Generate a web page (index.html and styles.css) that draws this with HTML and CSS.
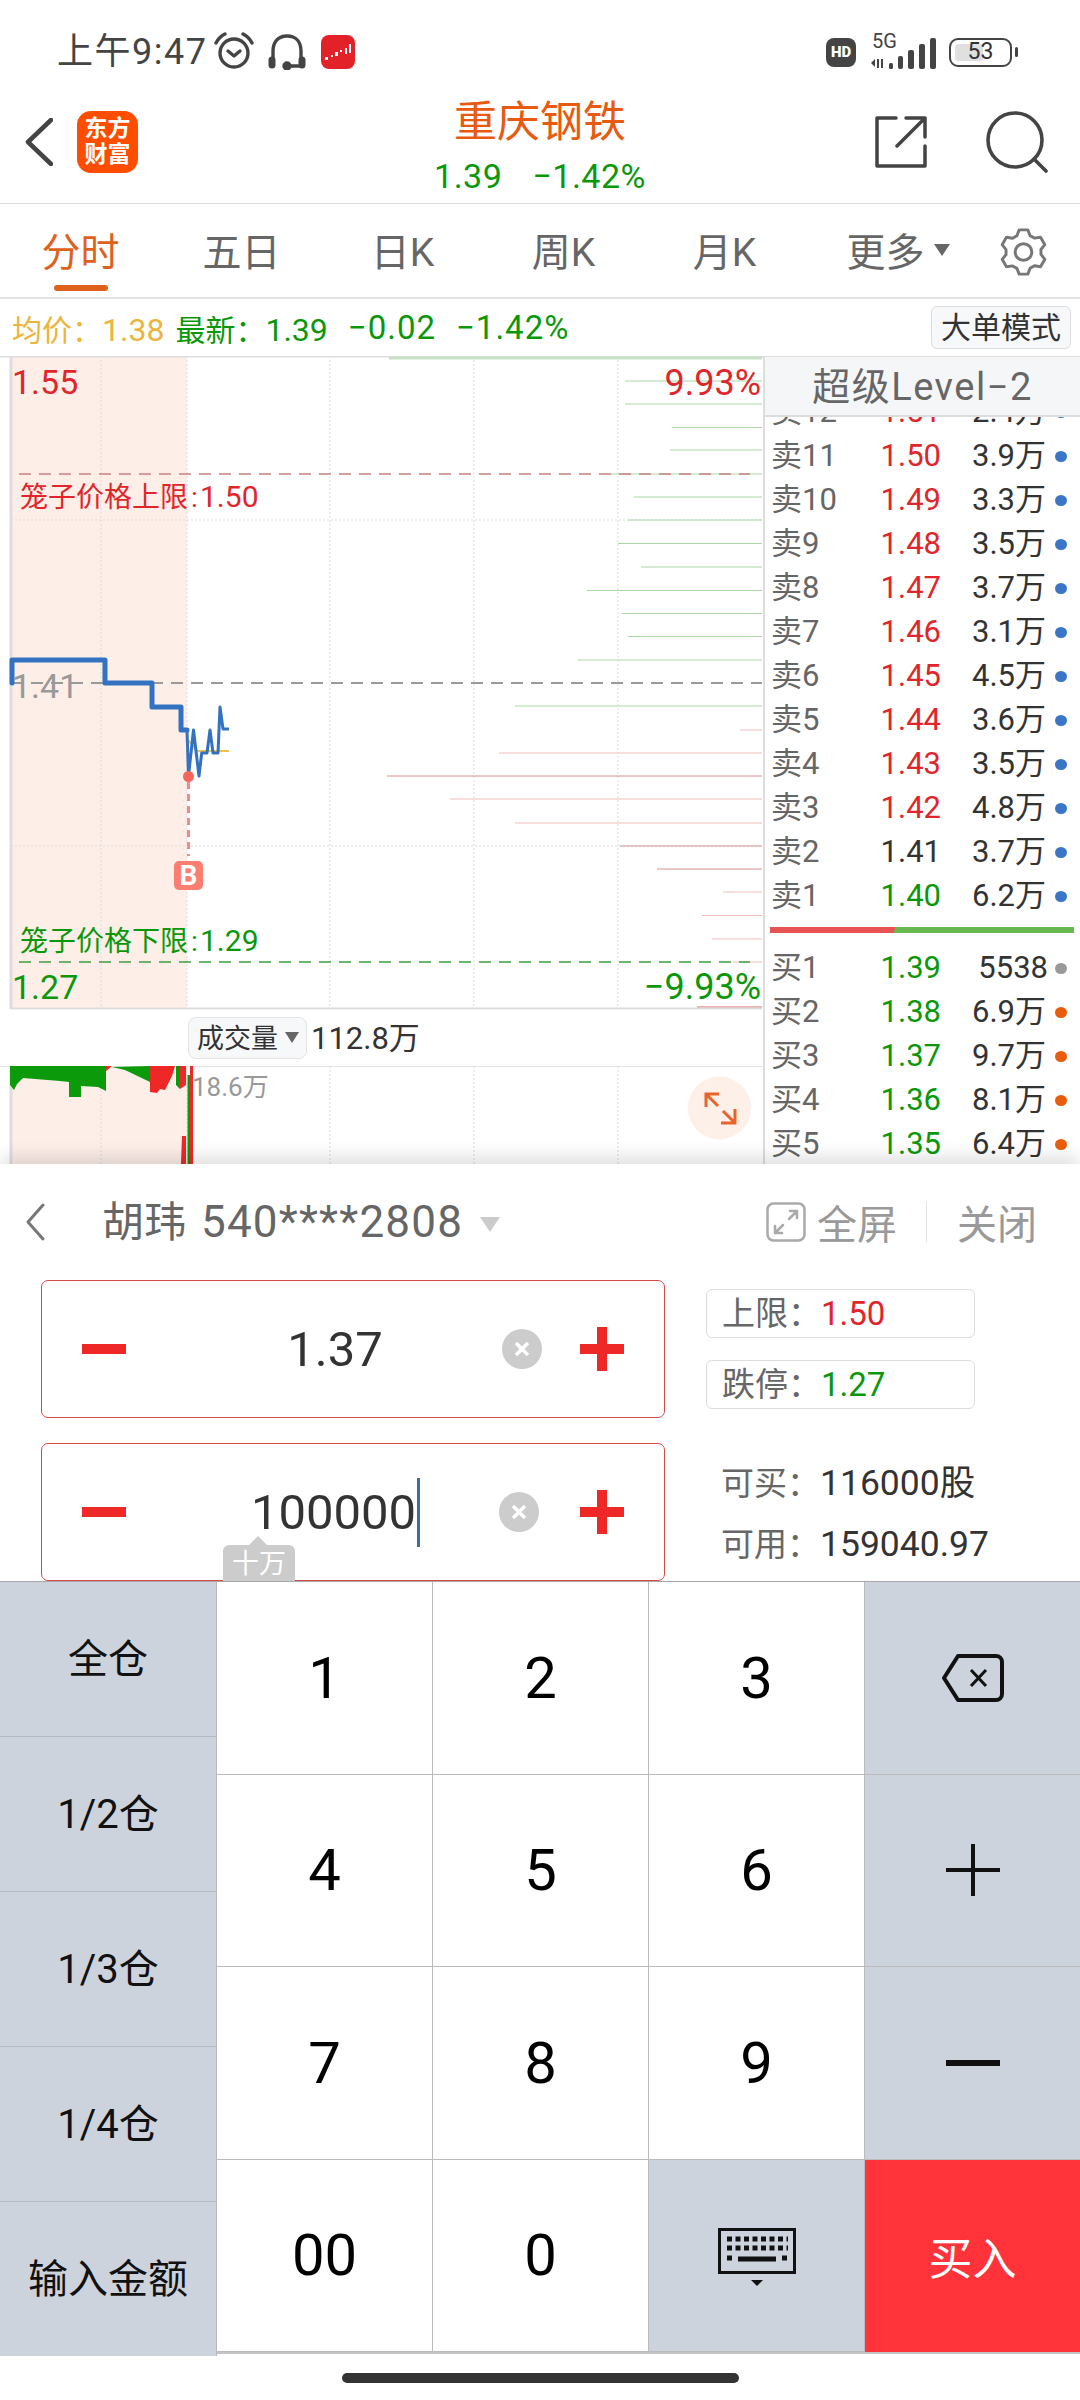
FILE: index.html
```html
<!DOCTYPE html>
<html lang="zh-CN">

<head>
    <meta charset="UTF-8">
    <meta name="viewport" content="width=device-width, initial-scale=1.0">
    <title>重庆钢铁</title>
    <link rel="stylesheet" href="styles.css">
</head>

<body>
    <!-- 상태바 -->
    <div class="status">
        <div class="status-left">
            <span class="clock">上午9:47</span>
            <svg class="ico-alarm" viewBox="0 0 40 40" fill="none" stroke="#444" stroke-width="3.4" stroke-linecap="round" stroke-linejoin="round">
                <circle cx="20" cy="21" r="14"/>
                <path d="M14 19l6 5 6-5"/>
                <path d="M2 11C4 7 7 4 11 2M38 11C36 7 33 4 29 2"/>
            </svg>
            <svg class="ico-headset" viewBox="0 0 38 36" fill="none" stroke="#444" stroke-width="3.4" stroke-linecap="round">
                <path d="M5 26V17C5 8 10 2 19 2s14 6 14 15v9"/>
                <path d="M4 26v5M34 26v5" stroke-width="7"/>
                <path d="M19 32h14"/>
                <circle cx="19" cy="32" r="3" fill="#444"/>
            </svg>
            <svg class="ico-app" viewBox="0 0 34 34">
                <rect width="34" height="34" rx="8" fill="#e22228"/>
                <path d="M4 22h3v3H4zM10 20h2v2h-2zM14 17h3v4h-3zM19 15h2v2h-2zM24 13h2v6h-2zM28 9h2v9h-2z" fill="#fff"/>
            </svg>
        </div>
        <div class="status-right">
            <span class="hd">HD</span>
            <svg class="ico-signal" viewBox="0 0 68 36">
                <text class="net-text" x="4" y="14">5G</text>
                <path d="M3 29l4-4v8zM9 25h2v9H9zM13 25h2v9h-2z" fill="#444"/>
                <rect x="21" y="29" width="4" height="6" rx="1.5" fill="#444"/>
                <rect x="30" y="22" width="5" height="13" rx="2" fill="#444"/>
                <rect x="40" y="16" width="6" height="19" rx="2" fill="#444"/>
                <rect x="51" y="10" width="6" height="25" rx="2" fill="#444"/>
                <rect x="62" y="4" width="6" height="31" rx="2" fill="#444"/>
            </svg>
            <div class="battery"><span class="battery-num">53</span></div>
        </div>
    </div>

    <!-- 상단 타이틀 -->
    <div class="nav">
        <div class="nav-left">
            <svg class="ico-back" viewBox="0 0 28 48" fill="none" stroke="#444" stroke-width="4.5" stroke-linecap="round" stroke-linejoin="round">
                <path d="M26 2L3 24l23 22"/>
            </svg>
            <div class="logo">东方<br>财富</div>
        </div>
        <div class="nav-title">
            <div class="stock-name">重庆钢铁</div>
            <div class="stock-price"><span>1.39</span><span>−1.42%</span></div>
        </div>
        <div class="nav-right">
            <svg class="ico-share" viewBox="0 0 52 52" fill="none" stroke="#444" stroke-width="3.5" stroke-linejoin="round" stroke-linecap="round">
                <path d="M21 2H2v48h48V30"/>
                <path d="M22 30L50 2M31 2h19v19"/>
            </svg>
            <svg class="ico-search" viewBox="0 0 62 62" fill="none" stroke="#444" stroke-width="3.6" stroke-linecap="round">
                <circle cx="29" cy="29" r="27"/>
                <path d="M48 48l12 12"/>
            </svg>
        </div>
    </div>

    <!-- 탭 -->
    <div class="tabs">
        <div class="tab select">分时</div>
        <div class="tab">五日</div>
        <div class="tab">日K</div>
        <div class="tab">周K</div>
        <div class="tab">月K</div>
        <div class="tab">更多<i class="tab-caret"></i></div>
        <svg class="ico-gear" viewBox="0 0 48 48" fill="none" stroke="#777" stroke-width="3" stroke-linejoin="round">
            <polygon points="17.3,7.3 19.6,1.4 28.4,1.4 30.7,7.3 35.1,9.8 41.4,8.9 45.8,16.5 41.8,21.4 41.85,26.5 45.8,31.5 41.4,39.1 35.15,38.1 30.7,40.7 28.4,46.6 19.6,46.6 17.3,40.7 12.9,38.2 6.6,39.1 2.2,31.5 6.2,26.6 6.15,21.5 2.2,16.5 6.6,8.9 12.85,9.9"/>
            <circle cx="24" cy="24" r="8.5"/>
        </svg>
    </div>

    <div class="quote-bar">
        <span class="avg">均价：<span class="quote-num">1.38</span></span>
        <span class="last">最新：<span class="quote-num">1.39</span></span>
        <span class="last change">−0.02</span>
        <span class="last change">−1.42%</span>
        <span class="mode-btn">大单模式</span>
    </div>

    <div class="market">
        <div class="chart">
            <!-- 분시 차트 -->
            <svg class="price-chart" viewBox="0 356 763 654">
                <rect x="11" y="356" width="176" height="652" fill="#fdeee8"/>
                <path d="M0 356.5H763" stroke="#ddd" stroke-width="2"/>
                <path d="M11 356V1009" stroke="#ddd" stroke-width="3"/>

                <path class="grid" d="M101 356V1008M187 356V1008M330 356V1008M474 356V1008M618 356V1008M11 520H762M11 846H762"/>

                <!-- 호가 잔량 -->
                <path d="M389 358H762" stroke="#c8e2c6" stroke-width="3"/>
                <path class="depth-g" d="M625 381H762M625 404H762M672 427.5H762M670 450H762M611 474H762M634 497H762M628 520H762M618 543.5H762M641 567H762M587 590.5H762M622 613.5H762M628 636.5H762M578 660H762M515 706H762"/>
                <path class="depth-r" d="M740 730H762M499 753H762M450 799H762M515 823H762M723 892H762M702 915.5H762M712 939H762M733 962H762"/>
                <path class="depth-d" d="M387 776H762M620 846H762M657 869H762"/>
                <path d="M697 1007H762" stroke="#eab0ae" stroke-width="2"/>

                <path d="M19 474H750" class="dash-red"/>
                <path d="M19 962H750" class="dash-green"/>
                <path d="M11 683H762" class="dash-gray"/>
                <path d="M11 1008.5H762" stroke="#ddd" stroke-width="2"/>

                <text class="label-lg c-red" x="12" y="394">1.55</text>
                <text class="label-xl c-red end" x="761" y="395">9.93%</text>
                <text class="label-lg c-gray" x="12" y="698">1.41</text>
                <text class="label-lg c-green" x="12" y="999">1.27</text>
                <text class="label-xl c-green end" x="761" y="999">−9.93%</text>
                <text class="label-sm c-red" x="20" y="507">笼子价格上限<tspan dx="3">:</tspan><tspan class="label-num" x="200">1.50</tspan></text>
                <text class="label-sm c-green" x="20" y="951">笼子价格下限<tspan dx="3">:</tspan><tspan class="label-num" x="200">1.29</tspan></text>

                <path d="M188 740L197 751H229" fill="none" stroke="#f5c04a" stroke-width="2"/>
                <path d="M12 683V660H105V683H152V707H181V730H187" fill="none" stroke="#3272c0" stroke-width="5" stroke-linejoin="round" stroke-linecap="round"/>
                <path d="M187 730L188.5 776L193.5 730L199 776L201.7 753H207L210 730L213 753H218L220 707L223 729H229" fill="none" stroke="#3272c0" stroke-width="3" stroke-linejoin="round"/>

                <path d="M188.5 782V856" stroke="#f78a80" stroke-width="3" stroke-dasharray="7 5"/>
                <circle cx="188.5" cy="776.5" r="5.5" fill="#f4685c"/>
                <rect x="174" y="861" width="29" height="29" rx="5" fill="#fb7e70"/>
                <text class="badge-b" x="188.5" y="885">B</text>
            </svg>

            <div class="vol-head">
                <span class="vol-btn">成交量<i class="vol-caret"></i></span>
                <span class="vol-num">112.8万</span>
            </div>

            <!-- 거래량 -->
            <svg class="vol-chart" viewBox="0 1066 763 98">
                <rect x="11" y="1066" width="176" height="98" fill="#fdeee8"/>
                <path d="M0 1066.5H763" stroke="#e4e4e4"/>
                <path d="M11 1066V1164" stroke="#ddd" stroke-width="3"/>
                <path class="grid" d="M101 1066V1164M187 1066V1164M330 1066V1164M474 1066V1164M618 1066V1164"/>
                <path fill="#0a9a0a" d="M10 1066V1085L14 1090L17 1084L23 1078L60 1081L69 1082V1097H81V1086L98 1087L106 1091V1066Z"/>
                <path fill="#0a9a0a" d="M112 1067L125 1070L150 1082V1066Z"/>
                <path fill="#0a9a0a" d="M176 1066V1085L180 1089V1066Z"/>
                <path fill="#ee2727" d="M106 1066V1071L112 1066Z"/>
                <path fill="#ee2727" d="M150 1066V1092L157 1093L160 1089L165 1090L172 1076L175 1066Z"/>
                <path fill="#ee2727" d="M180 1066V1089L186 1085V1066Z"/>
                <path fill="#ee2727" d="M182 1136H186V1164H181Z"/>
                <rect x="187.5" y="1075" width="2.5" height="89" fill="#0a9a0a"/>
                <rect x="190" y="1066" width="3" height="98" fill="#ee2727"/>
                <text class="label-xs c-gray" x="192" y="1096">18.6万</text>
                <circle cx="719.5" cy="1108" r="31.5" fill="#fdf0e8"/>
                <path d="M706 1107V1094H719M706 1094L718 1106M735 1109V1123H721M735 1123L723 1111" fill="none" stroke="#e8642a" stroke-width="3"/>
            </svg>
        </div>

        <div class="book">
            <div class="book-title">超级Level−2</div>
            <div class="asks">
                <div class="row"><span class="row-name">卖12</span><span class="c-red">1.51</span><span>2.4万</span><i class="dot"></i></div>
                <div class="row"><span class="row-name">卖11</span><span class="c-red">1.50</span><span>3.9万</span><i class="dot"></i></div>
                <div class="row"><span class="row-name">卖10</span><span class="c-red">1.49</span><span>3.3万</span><i class="dot"></i></div>
                <div class="row"><span class="row-name">卖9</span><span class="c-red">1.48</span><span>3.5万</span><i class="dot"></i></div>
                <div class="row"><span class="row-name">卖8</span><span class="c-red">1.47</span><span>3.7万</span><i class="dot"></i></div>
                <div class="row"><span class="row-name">卖7</span><span class="c-red">1.46</span><span>3.1万</span><i class="dot"></i></div>
                <div class="row"><span class="row-name">卖6</span><span class="c-red">1.45</span><span>4.5万</span><i class="dot"></i></div>
                <div class="row"><span class="row-name">卖5</span><span class="c-red">1.44</span><span>3.6万</span><i class="dot"></i></div>
                <div class="row"><span class="row-name">卖4</span><span class="c-red">1.43</span><span>3.5万</span><i class="dot"></i></div>
                <div class="row"><span class="row-name">卖3</span><span class="c-red">1.42</span><span>4.8万</span><i class="dot"></i></div>
                <div class="row"><span class="row-name">卖2</span><span>1.41</span><span>3.7万</span><i class="dot"></i></div>
                <div class="row"><span class="row-name">卖1</span><span class="c-green">1.40</span><span>6.2万</span><i class="dot"></i></div>
            </div>
            <div class="ratio"></div>
            <div class="bids">
                <div class="row"><span class="row-name">买1</span><span class="c-green">1.39</span><span class="row-vol-wide">5538</span><i class="dot dot-gray"></i></div>
                <div class="row"><span class="row-name">买2</span><span class="c-green">1.38</span><span>6.9万</span><i class="dot dot-orange"></i></div>
                <div class="row"><span class="row-name">买3</span><span class="c-green">1.37</span><span>9.7万</span><i class="dot dot-orange"></i></div>
                <div class="row"><span class="row-name">买4</span><span class="c-green">1.36</span><span>8.1万</span><i class="dot dot-orange"></i></div>
                <div class="row"><span class="row-name">买5</span><span class="c-green">1.35</span><span>6.4万</span><i class="dot dot-orange"></i></div>
            </div>
        </div>
    </div>

    <!-- 주문 패널 -->
    <div class="panel">
        <div class="acct">
            <svg class="ico-acct-back" viewBox="0 0 20 38" fill="none" stroke="#777" stroke-width="3" stroke-linecap="round" stroke-linejoin="round">
                <path d="M18 2L3 19l15 17"/>
            </svg>
            <span class="acct-name">胡玮<span class="acct-no">540****2808</span></span>
            <i class="acct-caret"></i>
            <svg class="ico-full" viewBox="0 0 40 40" fill="none" stroke="#aaa" stroke-width="2.5" stroke-linecap="round" stroke-linejoin="round">
                <rect x="1.5" y="1.5" width="37" height="37" rx="6"/>
                <path d="M23 17L31 9M24 9h7v7M17 23l-8 8M9 24v7h7"/>
            </svg>
            <span class="acct-act">全屏</span>
            <i class="acct-sep"></i>
            <span class="acct-act">关闭</span>
        </div>

        <div class="order">
            <div class="steppers">
                <div class="stepper">
                    <svg class="step-btn" viewBox="0 0 44 44"><rect y="17" width="44" height="10" fill="#ee2727"/></svg>
                    <div class="step-value">1.37</div>
                    <svg class="clear" viewBox="0 0 40 40"><circle cx="20" cy="20" r="20" fill="#ccc"/><path d="M14 14l12 12M26 14L14 26" stroke="#fff" stroke-width="3.5"/></svg>
                    <svg class="step-btn" viewBox="0 0 44 44"><path d="M0 17h17V0h10v17h17v10H27v17H17V27H0z" fill="#ee2727"/></svg>
                </div>
                <div class="stepper">
                    <svg class="step-btn" viewBox="0 0 44 44"><rect y="17" width="44" height="10" fill="#ee2727"/></svg>
                    <div class="step-value"><span class="caret-text">100000</span></div>
                    <svg class="clear clear-qty" viewBox="0 0 40 40"><circle cx="20" cy="20" r="20" fill="#ccc"/><path d="M14 14l12 12M26 14L14 26" stroke="#fff" stroke-width="3.5"/></svg>
                    <svg class="step-btn" viewBox="0 0 44 44"><path d="M0 17h17V0h10v17h17v10H27v17H17V27H0z" fill="#ee2727"/></svg>
                    <div class="unit-tip">十万</div>
                </div>
            </div>
            <div class="limits">
                <div class="limit-box">上限：<span class="c-red">1.50</span></div>
                <div class="limit-box">跌停：<span class="c-green">1.27</span></div>
                <div class="avail">可买：<span>116000股</span></div>
                <div class="avail">可用：<span>159040.97</span></div>
            </div>
        </div>
    </div>

    <!-- 숫자 키패드 -->
    <div class="keypad">
        <div class="key-side">
            <div class="key-s">全仓</div>
            <div class="key-s">1/2仓</div>
            <div class="key-s">1/3仓</div>
            <div class="key-s">1/4仓</div>
            <div class="key-s key-s-last">输入金额</div>
        </div>
        <div class="key-grid">
            <div class="key">1</div>
            <div class="key">2</div>
            <div class="key">3</div>
            <div class="key key-gray">
                <svg class="ico-del" viewBox="0 0 62 48" fill="none" stroke="#111" stroke-width="4" stroke-linejoin="round">
                    <path d="M16 2H54a6 6 0 0 1 6 6V40a6 6 0 0 1-6 6H16L2 24Z"/>
                    <path d="M29 16l15 16M44 16L29 32" stroke-width="3"/>
                </svg>
            </div>
            <div class="key">4</div>
            <div class="key">5</div>
            <div class="key">6</div>
            <div class="key key-gray">
                <svg class="ico-plus" viewBox="0 0 54 52"><path d="M0 24h25V0h4v24h25v4H29v24h-4V28H0z" fill="#111"/></svg>
            </div>
            <div class="key">7</div>
            <div class="key">8</div>
            <div class="key">9</div>
            <div class="key key-gray">
                <svg class="ico-minus" viewBox="0 0 54 6"><rect width="54" height="6" fill="#111"/></svg>
            </div>
            <div class="key">00</div>
            <div class="key">0</div>
            <div class="key key-gray">
                <svg class="ico-kbd" viewBox="0 0 78 60" fill="none" stroke="#111">
                    <rect x="1.5" y="1.5" width="75" height="43" stroke-width="3"/>
                    <path d="M9 11H70M9 20H70" stroke-width="5" stroke-dasharray="5 3.5"/>
                    <path d="M9 30H14M20 31H58M64 30H69" stroke-width="5"/>
                    <path d="M33 52h12l-6 6z" fill="#111" stroke="none"/>
                </svg>
            </div>
            <div class="key key-buy">买入</div>
        </div>
    </div>

    <div class="home-bar"><i class="home-line"></i></div>
</body>

</html>
```

FILE: styles.css
```css
* {
    box-sizing: border-box;
}

body {
    margin: 0;
    width: 1080px;
    height: 2400px;
    overflow: hidden;
    background: #fff;
    color: #333;
    font-family: Roboto, "Noto Sans CJK SC", sans-serif;
}

i {
    display: block;
    font-style: normal;
}

.c-red { color: #e0262a; fill: #e0262a; }
.c-green { color: #0a980a; fill: #0a980a; }
.c-gray { color: #999; fill: #999; }

/* status bar */
.status {
    height: 90px;
    padding: 14px 68px 0 57px;
    display: flex;
    justify-content: space-between;
    align-items: center;
}

.status-left,
.status-right {
    display: flex;
    align-items: center;
}

.clock {
    font-size: 36px;
    letter-spacing: 1.5px;
    color: #444;
    line-height: 40px;
}

.ico-alarm { width: 40px; height: 40px; margin-left: 7px; }
.ico-headset { width: 38px; height: 36px; margin-left: 14px; }
.ico-app { width: 34px; height: 34px; margin-left: 15px; }

.hd {
    width: 30px;
    height: 29px;
    border-radius: 8px;
    background: #444;
    color: #fff;
    font-size: 15px;
    font-weight: 900;
    line-height: 29px;
    text-align: center;
}

.ico-signal {
    width: 68px;
    height: 36px;
    margin-left: 12px;
    overflow: visible;
}

.net-text {
    font-size: 20px;
    fill: #444;
}

.battery {
    position: relative;
    width: 63px;
    height: 29px;
    margin-left: 13px;
    border: 2.5px solid #444;
    border-radius: 9px;
    text-align: center;
}

.battery::before {
    content: "";
    position: absolute;
    left: 4px;
    top: 4px;
    bottom: 4px;
    width: 28px;
    border-radius: 3px;
    background: #e0e0e0;
}

.battery::after {
    content: "";
    position: absolute;
    right: -8px;
    top: 7px;
    width: 3px;
    height: 10px;
    background: #444;
    border-radius: 2px;
}

.battery-num {
    position: relative;
    font-size: 23px;
    line-height: 24px;
    color: #333;
    display: block;
}

/* title */
.nav {
    height: 114px;
    display: grid;
    grid-template-columns: 1fr auto 1fr;
    border-bottom: 1px solid #ddd;
}

.nav-left,
.nav-right {
    display: flex;
    align-items: center;
    padding-bottom: 9px;
}

.nav-left { padding-left: 25px; }
.nav-right { justify-content: flex-end; padding-right: 32px; }

.ico-back { width: 28px; height: 48px; }

.logo {
    width: 61px;
    height: 62px;
    margin-left: 24px;
    padding-top: 5px;
    border-radius: 14px;
    background: #ff4d00;
    color: #fff;
    font-size: 23px;
    font-weight: 700;
    line-height: 26px;
    text-align: center;
}

.ico-share { width: 52px; height: 52px; }
.ico-search { width: 62px; height: 62px; margin-left: 59px; }

.nav-title {
    text-align: center;
    padding-top: 7px;
}

.stock-name {
    font-size: 43px;
    line-height: 50px;
    color: #e85a10;
}

.stock-price {
    margin-top: 9px;
    font-size: 34px;
    letter-spacing: .5px;
    line-height: 40px;
    color: #0a980a;
    display: flex;
    gap: 30px;
    justify-content: center;
}

/* tabs */
.tabs {
    height: 95px;
    display: flex;
    border-bottom: 2px solid #e2e2e2;
}

.tab {
    width: 161px;
    padding-top: 29px;
    font-size: 39px;
    line-height: 40px;
    color: #666;
    text-align: center;
}

.tab.select {
    color: #e0611c;
}

.tab.select::after {
    content: "";
    display: block;
    width: 54px;
    height: 6px;
    margin: 12px auto 0;
    border-radius: 3px;
    background: #e0611c;
}

/* 더보기 삼각형은 글자 가운데 정렬에 영향을 주지 않게 한다 */
.tab-caret {
    display: inline-block;
    margin: 0 -25px 0 9px;
    vertical-align: 10px;
    border: 8px solid transparent;
    border-top: 12px solid #666;
    border-bottom: 0;
}

.ico-gear {
    width: 47px;
    height: 48px;
    margin: 24px 0 0 34px;
}

/* latest price bar */
.quote-bar {
    height: 57px;
    padding: 0 9px 0 12px;
    display: flex;
    align-items: center;
    font-size: 30px;
}

.avg { color: #ecb43c; }
.last { color: #0a980a; margin-left: 11px; }

.quote-num {
    font-size: 32px;
}

.last.change {
    margin-left: 20px;
    font-size: 33px;
    letter-spacing: 1px;
}

.mode-btn {
    margin-left: auto;
    width: 140px;
    height: 43px;
    border: 1px solid #ddd;
    border-radius: 6px;
    background: #f7f8fa;
    color: #333;
    line-height: 41px;
    text-align: center;
}

/* chart + order book */
.market {
    height: 808px;
    display: flex;
    overflow: hidden;
}

.chart {
    width: 763px;
    flex-shrink: 0;
}

.chart svg {
    display: block;
    width: 763px;
}

.price-chart { height: 654px; }
.vol-chart { height: 98px; }

.grid {
    fill: none;
    stroke: #ddd;
    stroke-width: 1;
    stroke-dasharray: 2 2;
}

.depth-g,
.depth-r,
.depth-d {
    fill: none;
    stroke-width: 1;
}

.depth-g { stroke: #a9d8a6; }
.depth-r { stroke: #f2bcbc; }
.depth-d { stroke: #d68f8f; }

.dash-red,
.dash-green,
.dash-gray {
    fill: none;
    stroke-width: 1.5;
    stroke-dasharray: 12 8;
}

.dash-red { stroke: #c98080; }
.dash-green { stroke: #3f9f3f; }
.dash-gray { stroke: #999; stroke-width: 2; }

.label-lg { font-size: 34px; }
.label-xl { font-size: 36px; }
.label-sm { font-size: 28px; }
.label-num { font-size: 30px; }
.label-xs { font-size: 26px; }
.end { text-anchor: end; }

.badge-b {
    font-size: 28px;
    font-weight: 700;
    fill: #fff;
    text-anchor: middle;
}

.vol-head {
    height: 56px;
    padding: 7px 0 0 188px;
    display: flex;
    font-size: 30px;
}

.vol-btn {
    width: 119px;
    height: 42px;
    padding: 2px 0 0 8px;
    border: 1px solid #e4e4e4;
    border-radius: 8px;
    background: #f7f8fa;
    font-size: 27px;
    line-height: 38px;
    white-space: nowrap;
    display: flex;
    align-items: center;
    gap: 7px;
}

.vol-caret {
    border: 7px solid transparent;
    border-top: 11px solid #666;
    border-bottom: 0;
    margin-bottom: 4px;
}

.vol-num {
    margin-left: 4px;
    font-size: 31px;
    line-height: 44px;
}

.book {
    flex: 1;
    border-left: 2px solid #ddd;
    font-size: 31px;
}

.book-title {
    height: 61px;
    background: #f5f6f8;
    border-top: 1px solid #ddd;
    border-bottom: 2px solid #ddd;
    color: #666;
    font-size: 38px;
    line-height: 60px;
    text-align: center;
    letter-spacing: 1.5px;
}

.asks {
    height: 501px;
    display: flex;
    flex-direction: column;
    justify-content: flex-end;
    overflow: hidden;
}

.row {
    flex: 0 0 44px;
    height: 44px;
    padding-left: 6px;
    display: grid;
    grid-template-columns: 81px 89px 105px 21px;
    align-items: center;
    line-height: 44px;
    text-align: right;
}

.row-name {
    color: #666;
    text-align: left;
}

.row-vol-wide {
    margin-right: -2px;
}

.dot {
    justify-self: end;
    width: 12px;
    height: 11px;
    border-radius: 50%;
    background: #3a76c4;
}

.dot-gray { background: #999; }
.dot-orange { background: #e85d0c; }

.ratio {
    height: 6px;
    margin: 9px 6px 13px 5px;
    background: linear-gradient(110deg, #e55353 41%, #66b84f 41%);
}

/* order panel */
.panel {
    position: relative;
    height: 417px;
    background: #fff;
    box-shadow: 0 -10px 16px -2px rgba(0, 0, 0, .12);
}

.acct {
    height: 116px;
    padding: 0 43px 0 25px;
    display: flex;
    align-items: center;
    color: #666;
}

.ico-acct-back { width: 20px; height: 38px; }

.acct-name {
    margin-left: 57px;
    font-size: 42px;
    line-height: 50px;
    white-space: nowrap;
}

.acct-no {
    margin-left: 15px;
    font-size: 44px;
    letter-spacing: 1.2px;
}

.acct-caret {
    margin: 4px 0 0 17px;
    border: 10px solid transparent;
    border-top: 15px solid #ccc;
    border-bottom: 0;
}

.ico-full {
    width: 40px;
    height: 40px;
    margin-left: auto;
}

.acct-act {
    margin-left: 11px;
    font-size: 40px;
    color: #999;
}

.acct-sep {
    width: 1px;
    height: 40px;
    margin: 0 20px 0 29px;
    background: #e4e4e4;
}

.acct-sep + .acct-act {
    margin-left: 10px;
}

.order {
    display: flex;
    padding-left: 41px;
}

.steppers {
    width: 624px;
    display: flex;
    flex-direction: column;
    gap: 25px;
}

.stepper {
    position: relative;
    height: 138px;
    border: 1px solid #d24a4a;
    border-radius: 7px;
    display: flex;
    align-items: center;
    padding: 0 40px;
}

.step-btn {
    width: 44px;
    height: 44px;
    flex-shrink: 0;
}

.step-value {
    flex: 1;
    padding-left: 42px;
    font-size: 49px;
    color: #333;
    text-align: center;
}

.caret-text {
    position: relative;
}

.caret-text::after {
    content: "";
    position: absolute;
    right: -4px;
    top: -6px;
    bottom: -6px;
    width: 3px;
    background: #3a6ea5;
}

.clear {
    width: 40px;
    height: 40px;
    margin-right: 38px;
    flex-shrink: 0;
}

.clear-qty {
    margin-right: 41px;
}

.unit-tip {
    position: absolute;
    left: 181px;
    bottom: -1px;
    width: 72px;
    height: 36px;
    background: #ccc;
    border-radius: 6px 6px 0 0;
    color: #fff;
    font-size: 27px;
    line-height: 38px;
    text-align: center;
}

.unit-tip::before {
    content: "";
    position: absolute;
    left: 26px;
    top: -9px;
    border: 9px solid transparent;
    border-bottom: 9px solid #ccc;
    border-top: 0;
}

.limits {
    margin: 9px 0 0 41px;
    font-size: 33px;
    color: #666;
}

.limit-box {
    width: 269px;
    height: 49px;
    margin-bottom: 22px;
    padding-left: 15px;
    border: 1px solid #ddd;
    border-radius: 6px;
    line-height: 47px;
}

.avail {
    padding-left: 15px;
    line-height: 60px;
    white-space: nowrap;
}

.avail:nth-child(3) {
    margin-top: 44px;
}

.avail span {
    color: #333;
    font-size: 35.5px;
}

/* keypad */
.keypad {
    height: 775px;
    display: flex;
    border-top: 1px solid #aaa;
}

.key-side {
    width: 217px;
    display: flex;
    flex-direction: column;
    border-right: 1px solid #b5b9c0;
    background: #cdd3dc;
}

.key-s {
    flex: 1;
    padding-bottom: 6px;
    display: flex;
    align-items: center;
    justify-content: center;
    border-bottom: 1px solid #b5b9c0;
    color: #111;
    font-size: 40px;
}

.key-s-last {
    border-bottom: 0;
}

.key-grid {
    flex: 1;
    height: 772px;
    display: grid;
    grid-template-columns: 216px 216px 216px 1fr;
    grid-template-rows: repeat(4, 1fr);
    border-bottom: 2px solid #c4c4c4;
}

.key {
    display: flex;
    align-items: center;
    justify-content: center;
    border-right: 1px solid #bbb;
    border-bottom: 1px solid #bbb;
    color: #000;
    font-size: 58px;
}

.key:nth-child(4n) {
    border-right: 0;
}

.key-gray {
    background: #cdd3dc;
}

.key-buy {
    background: #ff3339;
    color: #fff;
    font-size: 44px;
    border: 0;
}

.ico-del { width: 62px; height: 48px; }
.ico-plus { width: 54px; height: 52px; }
.ico-minus { width: 54px; height: 6px; }
.ico-kbd { width: 78px; height: 60px; margin-top: 6px; }

.home-bar {
    height: 44px;
    padding-top: 17px;
}

.home-line {
    width: 397px;
    height: 10px;
    margin: 0 auto;
    border-radius: 5px;
    background: #333;
}
```
